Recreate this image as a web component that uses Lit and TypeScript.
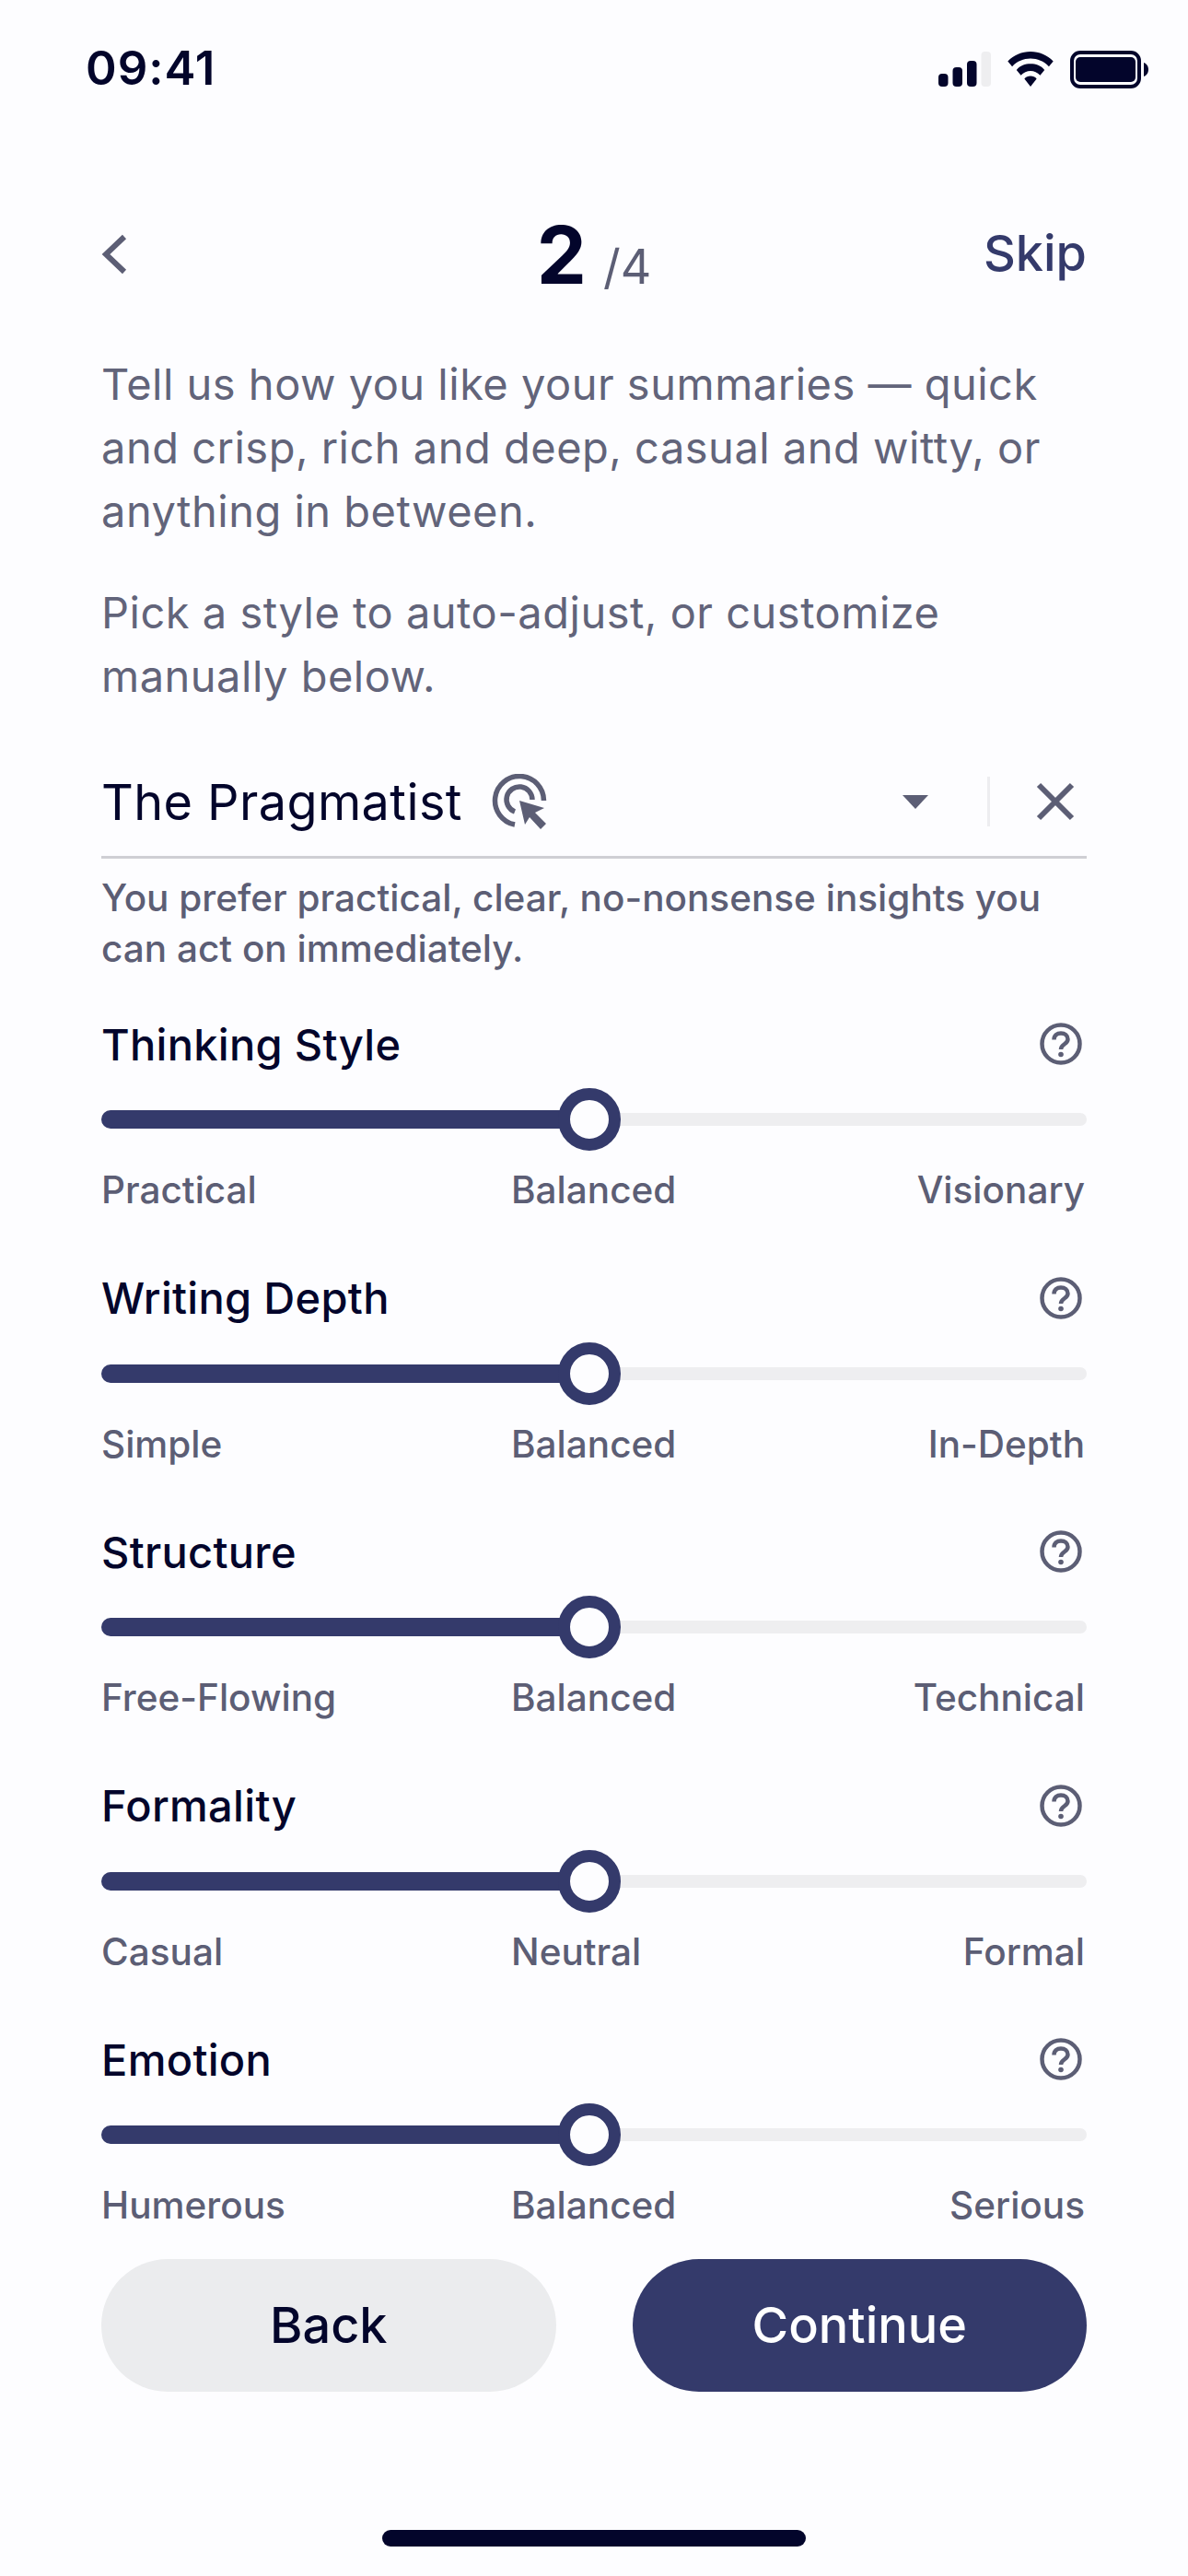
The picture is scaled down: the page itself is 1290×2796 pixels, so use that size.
import { LitElement, html, css, svg } from 'lit';
import { customElement } from 'lit/decorators.js';

interface Trait {
  title: string;
  low: string;
  mid: string;
  high: string;
}

const TRAITS: Trait[] = [
  { title: 'Thinking Style', low: 'Practical', mid: 'Balanced', high: 'Visionary' },
  { title: 'Writing Depth', low: 'Simple', mid: 'Balanced', high: 'In-Depth' },
  { title: 'Structure', low: 'Free-Flowing', mid: 'Balanced', high: 'Technical' },
  { title: 'Formality', low: 'Casual', mid: 'Neutral', high: 'Formal' },
  { title: 'Emotion', low: 'Humerous', mid: 'Balanced', high: 'Serious' },
];

const SLIDER_POS = 530;

const helpIcon = svg`
  <circle cx="23" cy="23" r="20.500" fill="none" stroke="#5c5e75" stroke-width="4.500"/>
  <path d="M15.500 18.500c0-4.500 3.300-7 7.500-7s7.500 2.600 7.500 6.500c0 5.500-7.500 5-7.500 11" fill="none" stroke="#5c5e75" stroke-width="4.500"/>
  <circle cx="23" cy="34.500" r="2.800" fill="#5c5e75"/>`;

@customElement('app-root')
export class AppRoot extends LitElement {
  static styles = css`
    :host {
      display: block;
      width: 1290px;
      height: 2796px;
      background: #fdfdff;
      color: #03052b;
      font-family: Inter, 'Noto Sans', sans-serif;
      overflow: hidden;
    }
    .status {
      height: 150px;
      padding: 0 43px 0 93px;
      display: flex;
      justify-content: space-between;
      align-items: center;
      box-sizing: border-box;
    }
    .time {
      margin-top: -3px;
      font-size: 51px;
      font-weight: 600;
      letter-spacing: 1px;
    }
    .status-icons {
      display: flex;
      align-items: center;
      gap: 17px;
    }
    .page {
      padding: 0 110px;
    }
    .nav {
      height: 100px;
      margin-top: 75px;
      display: grid;
      grid-template-columns: 1fr auto 1fr;
      align-items: center;
    }
    .nav svg {
      margin-top: -2px;
    }
    .step {
      display: flex;
      align-items: baseline;
      gap: 18px;
      font-size: 86px;
      font-weight: 700;
    }
    .step span {
      font-size: 52px;
      font-weight: 400;
      color: #5c5e75;
    }
    .skip {
      justify-self: end;
      margin-top: -6px;
      font-size: 54px;
      font-weight: 500;
      color: #343a6b;
    }
    .intro {
      margin: 57px 0 0;
      font-size: 47px;
      line-height: 69px;
      letter-spacing: 0.5px;
      color: #62647a;
    }
    .intro + .intro {
      margin-top: 41px;
    }
    .picker {
      margin-top: 43px;
      height: 118px;
      border-bottom: 3px solid #cfcfd4;
      display: flex;
      align-items: center;
    }
    .picker-name {
      font-size: 54px;
      letter-spacing: 0.4px;
    }
    .target {
      margin-left: 32px;
    }
    .caret {
      margin-left: auto;
    }
    .sep {
      width: 3px;
      height: 54px;
      margin: 0 50px 0 64px;
      background: #ededf0;
    }
    .close {
      margin-right: 13px;
    }
    .blurb {
      margin: 15px 0 0;
      font-size: 40.500px;
      line-height: 55px;
      font-weight: 500;
      color: #5c5e75;
    }
    .traits {
      margin-top: 28px;
    }
    .trait {
      height: 275.500px;
      box-sizing: border-box;
      padding-top: 20px;
    }
    .trait-head {
      display: flex;
      justify-content: space-between;
      align-items: center;
      height: 56px;
      font-size: 47px;
      font-weight: 500;
      letter-spacing: 0.3px;
    }
    .trait-head svg {
      margin-right: 5px;
    }
    .track {
      position: relative;
      margin-top: 47px;
      height: 14px;
      border-radius: 7px;
      background: #eeeef0;
    }
    .fill {
      position: absolute;
      left: 0;
      top: -3px;
      height: 20px;
      border-radius: 10px;
      background: #343a6b;
    }
    .thumb {
      position: absolute;
      top: -27px;
      width: 68px;
      height: 68px;
      margin-left: -34px;
      box-sizing: border-box;
      border: 13px solid #343a6b;
      border-radius: 50%;
      background: #fdfdff;
    }
    .scale {
      margin-top: 44px;
      padding-right: 2px;
      display: grid;
      grid-template-columns: 445px 1fr auto;
      font-size: 40.500px;
      line-height: 52px;
      font-weight: 500;
      color: #5c5e75;
    }
    .actions {
      margin-top: -11px;
      display: grid;
      grid-template-columns: 1fr 1fr;
      gap: 83px;
    }
    .btn {
      height: 144px;
      border-radius: 72px;
      display: flex;
      align-items: center;
      justify-content: center;
      font-size: 54px;
      font-weight: 500;
    }
    .back {
      background: #ebecee;
    }
    .next {
      background: #343a6b;
      color: #fff;
    }
    .home {
      width: 460px;
      height: 18px;
      margin: 150px auto 0;
      border-radius: 9px;
      background: #03052b;
    }
  `;

  renderStatus() {
    return html`
      <div class="status">
        <div class="time">09:41</div>
        <div class="status-icons">
          <svg width="57" height="38" viewBox="0 0 57 38">
            <rect x="0" y="24" width="10.500" height="14" rx="4" fill="#03052b" />
            <rect x="15.500" y="17" width="10.500" height="21" rx="4" fill="#03052b" />
            <rect x="31" y="10" width="10.500" height="28" rx="4" fill="#03052b" />
            <rect x="46.500" y="0" width="10.500" height="38" rx="4" fill="#eeeef0" />
          </svg>
          <svg width="52" height="38" viewBox="0 0 54 40">
            <path d="M27 0C17 0 8 4 1 11l5 6C12 11 19 8 27 8s15 3 21 9l5-6C46 4 37 0 27 0z" fill="#03052b" />
            <path d="M27 14c-6 0-12 2-16 7l5 6c3-3 7-5 11-5s8 2 11 5l5-6c-4-5-10-7-16-7z" fill="#03052b" />
            <path d="M27 28c-3 0-5 1-7 3l7 9 7-9c-2-2-4-3-7-3z" fill="#03052b" />
          </svg>
          <svg width="85" height="41" viewBox="0 0 85 41">
            <rect x="2" y="2" width="73" height="37" rx="9" fill="none" stroke="#03052b" stroke-width="4" />
            <rect x="6" y="7" width="65" height="27" rx="5" fill="#03052b" />
            <path d="M80 13c3 1 5 4 5 7.500s-2 6.500-5 7.500z" fill="#03052b" />
          </svg>
        </div>
      </div>
    `;
  }

  renderPicker() {
    return html`
      <div class="picker">
        <div class="picker-name">The Pragmatist</div>
        <svg class="target" width="60" height="60" viewBox="0 0 60 60">
          <path d="M25 55A26.500 26.500 0 1 1 56.500 29" fill="none" stroke="#5c5e75" stroke-width="5.500" />
          <path d="M25 41A14 14 0 1 1 44 28" fill="none" stroke="#5c5e75" stroke-width="5.500" />
          <path d="M30 29L57 37 47 42 59 54 53 60 41 47 36 55z" fill="#5c5e75" />
        </svg>
        <svg class="caret" width="28" height="15" viewBox="0 0 28 15">
          <path d="M0 0h28L14 15z" fill="#5c5e75" />
        </svg>
        <div class="sep"></div>
        <svg class="close" width="42" height="42" viewBox="0 0 42 42">
          <path d="M3 3l36 36M39 3L3 39" fill="none" stroke="#5c5e75" stroke-width="6" />
        </svg>
      </div>
    `;
  }

  renderTrait(trait: Trait) {
    return html`
      <div class="trait">
        <div class="trait-head">
          <span>${trait.title}</span>
          <svg width="46" height="46" viewBox="0 0 46 46">${helpIcon}</svg>
        </div>
        <div class="track">
          <div class="fill" style="width: ${SLIDER_POS}px"></div>
          <div class="thumb" style="left: ${SLIDER_POS}px"></div>
        </div>
        <div class="scale">
          <span>${trait.low}</span>
          <span>${trait.mid}</span>
          <span>${trait.high}</span>
        </div>
      </div>
    `;
  }

  render() {
    return html`
      ${this.renderStatus()}
      <div class="page">
        <div class="nav">
          <svg width="28" height="44" viewBox="0 0 28 44">
            <path d="M25 3L5 22l20 19" fill="none" stroke="#5c5e75" stroke-width="6" />
          </svg>
          <div class="step">2 <span>/4</span></div>
          <div class="skip">Skip</div>
        </div>
        <p class="intro">
          Tell us how you like your summaries — quick<br />
          and crisp, rich and deep, casual and witty, or<br />
          anything in between.
        </p>
        <p class="intro">Pick a style to auto-adjust, or customize<br />manually below.</p>
        ${this.renderPicker()}
        <p class="blurb">
          You prefer practical, clear, no-nonsense insights you<br />
          can act on immediately.
        </p>
        <div class="traits">${TRAITS.map((t) => this.renderTrait(t))}</div>
        <div class="actions">
          <div class="btn back">Back</div>
          <div class="btn next">Continue</div>
        </div>
        <div class="home"></div>
      </div>
    `;
  }
}
